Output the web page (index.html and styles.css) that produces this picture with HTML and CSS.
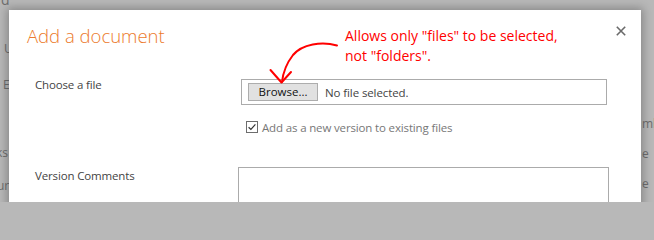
FILE: index.html
```html
<!DOCTYPE html>
<html lang="en">
<head>
<meta charset="utf-8">
<title>Add a document</title>
<link rel="stylesheet" href="styles.css">
</head>
<body>
<div class="page">
  <div class="backdrop">
    <span class="frag f-d">d</span>
    <span class="frag f-u">U</span>
    <span class="frag f-e">E</span>
    <span class="frag f-ks">ks</span>
    <span class="frag f-ur">ur</span>
    <span class="frag f-mb">mb</span>
    <span class="frag f-e1">e</span>
    <span class="frag f-e2">e</span>
  </div>

  <div class="dialog">
    <div class="dialog-header">
      <h1 class="title">Add a document</h1>
      <button class="close" aria-label="Close">
        <svg width="10" height="10" viewBox="0 0 10 10"><path d="M0.8 0.8 L9.2 9.2 M9.2 0.8 L0.8 9.2" stroke="#6a6a6a" stroke-width="1.6" fill="none"/></svg>
      </button>
    </div>

    <div class="form">
      <div class="label label-file">Choose a file</div>
      <div class="field">
        <div class="file-input">
          <span class="browse">Browse...</span>
          <span class="file-status">No file selected.</span>
        </div>
        <div class="check-row">
          <span class="checkbox">
            <svg width="12" height="12" viewBox="0 0 12 12"><rect x="0.5" y="0.5" width="11" height="11" fill="#fff" stroke="#6d6d6d"/><path d="M2.6 6.2 L4.9 8.4 L9.4 3.4" stroke="#333" stroke-width="1.2" fill="none"/></svg>
          </span>
          <span class="check-text">Add as a new version to existing files</span>
        </div>
      </div>

      <div class="label label-comments">Version Comments</div>
      <div class="textarea"></div>
    </div>

    <div class="annotation">Allows only "files" to be selected,<br>not "folders".</div>
  </div>

  <svg class="arrow" width="654" height="202" viewBox="0 0 654 202">
    <path d="M337 45.5 C322 41 302 44 293 55 C286 64 283 73 282 82" stroke="#f00" stroke-width="2" fill="none" stroke-linecap="round"/>
    <path d="M270.5 70 L281.5 82.5 L291 72" stroke="#f00" stroke-width="2" fill="none" stroke-linecap="round" stroke-linejoin="round"/>
  </svg>
</div>
</body>
</html>
```

FILE: styles.css
```css
* { box-sizing: border-box; }

html, body {
  margin: 0;
  padding: 0;
  background: #b8b8b8;
}

body {
  width: 654px;
  height: 202px;
  overflow: hidden;
  font-family: "Open Sans", "Noto Sans", "DejaVu Sans", sans-serif;
}

.page {
  position: relative;
  width: 654px;
  height: 202px;
  overflow: hidden;
  background: #b8b8b8;
}

.backdrop {
  position: absolute;
  inset: 0;
}

.frag {
  position: absolute;
  font-size: 12px;
  line-height: 14px;
  color: #6e6e6e;
  white-space: nowrap;
}

.f-d { left: 1px; top: -7px; font-size: 14px; }
.f-u { left: 4px; top: 42px; }
.f-e { left: 3px; top: 78px; }
.f-ks { left: -4px; top: 146px; }
.f-ur { left: -3px; top: 179px; }
.f-mb { left: 642px; top: 117px; }
.f-e1 { left: 642px; top: 147px; }
.f-e2 { left: 642px; top: 177px; }

.dialog {
  position: absolute;
  left: 9px;
  top: 10px;
  width: 632px;
  height: 230px;
  background: #fff;
  box-shadow: 0 0 9px 2px rgba(0, 0, 0, 0.28);
}

.dialog-header {
  display: flex;
  justify-content: space-between;
  align-items: flex-start;
  padding: 14px 15px 0 18px;
}

.title {
  margin: 0;
  font-size: 18.5px;
  line-height: 24px;
  font-weight: 300;
  color: #ec7a2c;
}

.close {
  margin-top: 2px;
  padding: 0;
  border: 0;
  background: none;
  width: 10px;
  height: 10px;
  display: block;
}

.close svg { display: block; }

.form {
  display: grid;
  grid-template-columns: 203px 371px;
  row-gap: 34px;
  margin-top: 29px;
  padding-left: 26px;
}

.label {
  font-size: 11.5px;
  line-height: 15px;
  letter-spacing: -0.15px;
  color: #444;
}

.label-comments { margin-top: 1px; }

.field {
  padding-left: 3px;
}

.file-input {
  margin-top: 2px;
  width: 366px;
  height: 26px;
  border: 1px solid #ababab;
  display: flex;
  align-items: center;
  padding-left: 6px;
}

.browse {
  width: 70px;
  height: 18px;
  background: #e1e1e1;
  border: 1px solid #adadad;
  font-size: 11.5px;
  line-height: 16px;
  text-align: center;
  color: #111;
}

.file-status {
  margin-left: 7px;
  font-size: 11.5px;
  letter-spacing: -0.1px;
  color: #444;
}

.check-row {
  display: flex;
  align-items: center;
  margin-top: 16px;
  padding-left: 5px;
  height: 12px;
}

.checkbox {
  width: 12px;
  height: 12px;
  display: block;
}

.checkbox svg { display: block; }

.check-text {
  margin-left: 4px;
  font-size: 11.5px;
  line-height: 15px;
  letter-spacing: -0.15px;
  color: #777;
  white-space: nowrap;
}

.textarea {
  width: 371px;
  height: 60px;
  border: 1px solid #ababab;
}

.annotation {
  position: absolute;
  left: 336px;
  top: 16px;
  font-size: 14px;
  line-height: 20px;
  color: #ff0000;
  white-space: nowrap;
}

.arrow {
  position: absolute;
  left: 0;
  top: 0;
  pointer-events: none;
}
```
